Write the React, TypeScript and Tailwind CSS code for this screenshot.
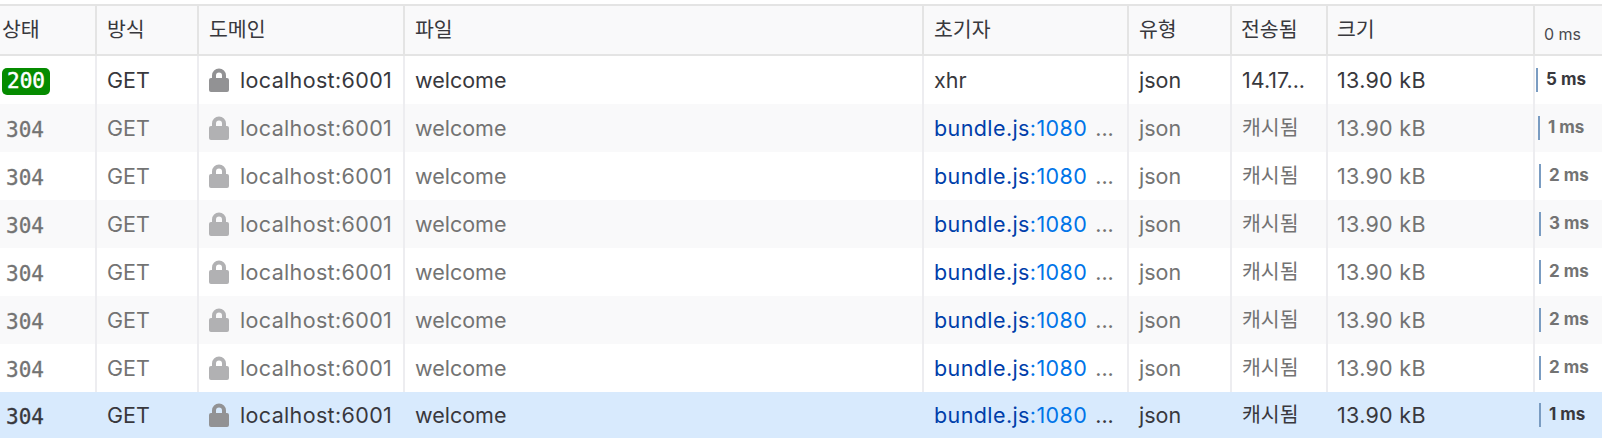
import React from 'react';

const columns = [
  { label: '상태', width: 'w-[97px]', pad: 'pl-[2px]' },
  { label: '방식', width: 'w-[102px]', pad: 'pl-[10px]' },
  { label: '도메인', width: 'w-[206px]', pad: 'pl-[10px]' },
  { label: '파일', width: 'w-[519px]', pad: 'pl-[10px]' },
  { label: '초기자', width: 'w-[205px]', pad: 'pl-[10px]' },
  { label: '유형', width: 'w-[103px]', pad: 'pl-[10px]' },
  { label: '전송됨', width: 'w-[96px]', pad: 'pl-[9px]' },
  { label: '크기', width: 'w-[207px]', pad: 'pl-[9px]' },
];

const rows = [
  { status: '200', transferred: '14.17...', initiator: 'xhr', ms: '5 ms', bar: 'ml-[1px]' },
  { status: '304', transferred: '캐시됨', initiator: 'bundle', ms: '1 ms', bar: 'ml-[3px]' },
  { status: '304', transferred: '캐시됨', initiator: 'bundle', ms: '2 ms', bar: 'ml-[4px]' },
  { status: '304', transferred: '캐시됨', initiator: 'bundle', ms: '3 ms', bar: 'ml-[4px]' },
  { status: '304', transferred: '캐시됨', initiator: 'bundle', ms: '2 ms', bar: 'ml-[4px]' },
  { status: '304', transferred: '캐시됨', initiator: 'bundle', ms: '2 ms', bar: 'ml-[4px]' },
  { status: '304', transferred: '캐시됨', initiator: 'bundle', ms: '2 ms', bar: 'ml-[4px]' },
  { status: '304', transferred: '캐시됨', initiator: 'bundle', ms: '1 ms', bar: 'ml-[4px]' },
];

function Lock({ className }: { className: string }) {
  return (
    <svg viewBox="0 0 20 24" className={`h-[24px] w-[20px] shrink-0 ${className}`} fill="currentColor">
      <path fillRule="evenodd" d="M3 10V7.5a7 7 0 0 1 14 0V10h1a2 2 0 0 1 2 2v10a2 2 0 0 1-2 2H2a2 2 0 0 1-2-2V12a2 2 0 0 1 2-2h1Zm4 0h6V7.5a3 3 0 0 0-6 0V10Z" />
    </svg>
  );
}

export default function App() {
  return (
    <div className="h-[438px] w-[1602px] overflow-hidden bg-white pt-[4px] font-['Inter','Noto_Sans_CJK_KR',sans-serif] text-[21.5px] text-[#38383d]">
      <div className="flex h-[52px] border-y-2 border-[#e4e4e4] bg-[#f9f9fa]">
        {columns.map((col) => (
          <div
            key={col.label}
            className={`${col.width} ${col.pad} flex shrink-0 items-center border-r-2 border-[#e4e4e4] text-[20.5px]`}
          >
            {col.label}
          </div>
        ))}
        <div className="flex-1 pl-[9px] pt-[16px] text-[16px] leading-[24px] text-[#4a4a4f]">0 ms</div>
      </div>
      {rows.map((row, i) => {
        const selected = i === 7;
        const cached = row.status === '304' && !selected;
        const bg = selected ? 'bg-[#d8eafd]' : i % 2 === 1 ? 'bg-[#f9f9fa]' : 'bg-white';
        const border = selected ? 'border-transparent' : 'border-[#ededf0]';
        const cell = `flex h-full shrink-0 items-center overflow-hidden whitespace-nowrap border-r-2 pl-[10px] ${border}`;
        return (
          <div
            key={i}
            className={`flex ${selected ? 'h-[46px]' : 'h-[48px]'} ${bg} ${cached ? 'text-[#737373]' : 'text-[#38383d]'}`}
          >
            <div className={`${cell} w-[97px] !pl-[2px] pt-[2px] font-['DejaVu_Sans_Mono',monospace] text-[21px]`}>
              {row.status === '200' ? (
                <span className="rounded-[5px] bg-[#058b00] px-[5px] leading-[27px] text-white [-webkit-text-stroke:0.5px_white]">200</span>
              ) : (
                <span className="pl-[4px] pt-[4px] [-webkit-text-stroke:0.3px_currentColor]">{row.status}</span>
              )}
            </div>
            <div className={`${cell} w-[102px]`}>GET</div>
            <div className={`${cell} w-[206px] gap-[11px]`}>
              <Lock className={cached ? 'text-[#b1b1b3]' : 'text-[#929294]'} />
              <span className="tracking-[0.35px]">localhost:6001</span>
            </div>
            <div className={`${cell} w-[519px]`}>welcome</div>
            <div className={`${cell} w-[205px]`}>
              {row.initiator === 'xhr' ? (
                'xhr'
              ) : (
                <>
                  <span className="tracking-[0.4px] text-[#003eaa]">bundle.js</span>
                  <span className="tracking-[0.4px] text-[#0074e8]">:1080</span>
                  <span className="ml-[8px]">...</span>
                </>
              )}
            </div>
            <div className={`${cell} w-[103px]`}>json</div>
            <div className={`${cell} w-[96px]`}>
              <span className={row.status === '200' ? '' : 'text-[20.5px]'}>{row.transferred}</span>
            </div>
            <div className={`${cell} w-[207px] !pl-[9px] tracking-[0.3px]`}>13.90 kB</div>
            <div className="flex h-full flex-1 items-center">
              <div className={`${row.bar} h-[24px] w-[2px] bg-[#7a9cc2]`} />
              <span className="ml-[8px] text-[17px] font-bold">{row.ms}</span>
            </div>
          </div>
        );
      })}
    </div>
  );
}
